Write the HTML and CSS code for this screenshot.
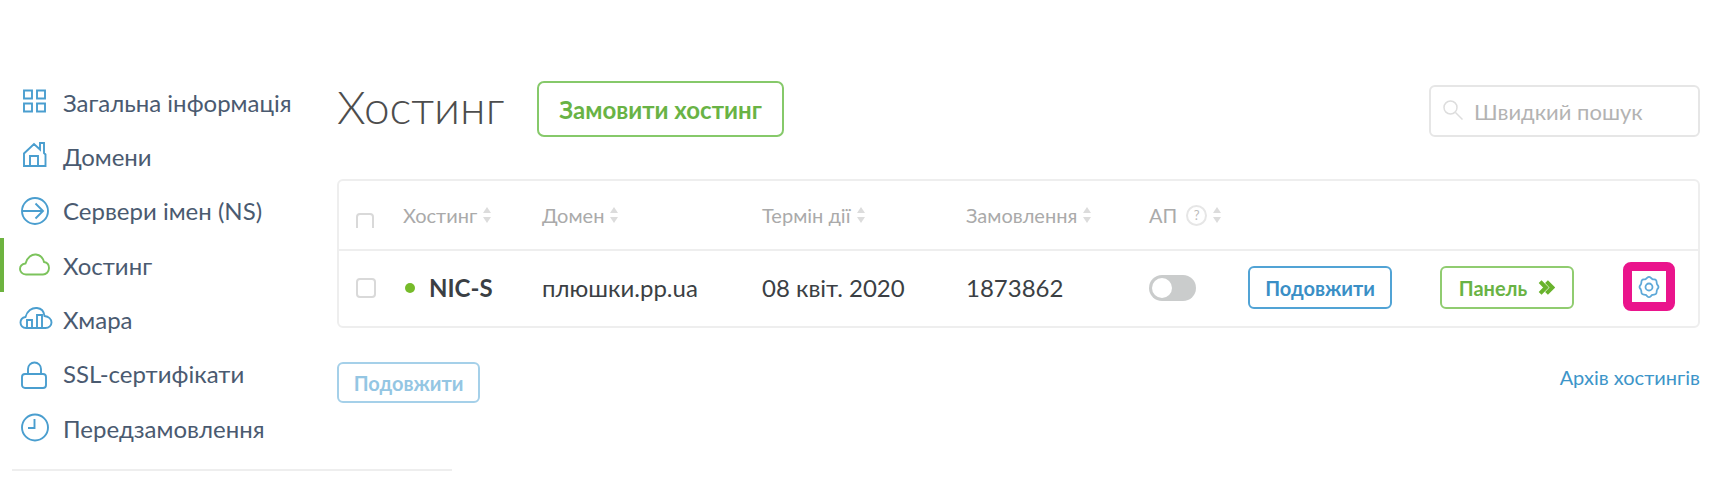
FILE: index.html
```html
<!DOCTYPE html>
<html lang="uk">
<head>
<meta charset="utf-8">
<title>Хостинг</title>
<link rel="stylesheet" href="styles.css">
</head>
<body>
<div class="layout">
  <nav class="side">
    <a class="item"><svg class="ico" viewBox="0 0 34 34"><path d="M5 5.5h8v8H5zM18 5.500h8v8h-8zM5 18.500h8v8H5zM18 18.500h8v8h-8z"/></svg>Загальна інформація</a>
    <a class="item"><svg class="ico" viewBox="0 0 34 34"><path d="M5 27V14.500L15 5l6 5.500V4h4v10l1.500 1.500V27zM11 27V17h8v10"/></svg>Домени</a>
    <a class="item"><svg class="ico" viewBox="0 0 34 34"><circle cx="16" cy="17" r="13"/><path d="M3 17h21M16.500 9.500l7.500 7.500-7.500 7.500"/></svg>Сервери імен (NS)</a>
    <a class="item active"><svg class="ico" viewBox="0 0 34 34"><path d="M7 26.500C3 26.500 1 23.500 1 21c0-3 2.500-5 5.500-5.500C8 9.500 13 6 17 6.500c4.500.5 7 3.500 8 7.500 3 .5 5 3 5 6 0 4-3 6.500-6 6.500z"/></svg>Хостинг</a>
    <a class="item"><svg class="ico" viewBox="0 0 34 34"><path d="M7 26C3.500 26 1.500 23.500 1.500 20.500c0-3 2.500-5 5-5.500C8 9 13 5.500 18 6c4.500.5 7 3.500 7.500 8 4 .5 7 3 7 6.500 0 3-2.500 5.500-6 5.500z"/><path d="M8 26v-8h5v8M18 26V13h5v13"/></svg>Хмара</a>
    <a class="item"><svg class="ico" viewBox="0 0 34 34"><rect x="3" y="17" width="24" height="14" rx="3"/><path d="M9 17v-5a6.500 6.500 0 0 1 13 0v5"/></svg>SSL-сертифікати</a>
    <a class="item"><svg class="ico" viewBox="0 0 34 34"><circle cx="16" cy="16.500" r="13"/><path d="M15.500 8v9H9"/></svg>Передзамовлення</a>
  </nav>
  <main class="main">
    <header class="head">
      <h1 class="title">Хостинг</h1>
      <a class="btn-order">Замовити хостинг</a>
      <label class="search"><svg class="search-ico" viewBox="0 0 20 20"><circle cx="7.500" cy="7.500" r="6.500"/><path d="M12.500 12.500l7 7"/></svg><span>Швидкий пошук</span></label>
    </header>
    <section class="card">
      <div class="row row-head">
        <span class="clip"><i class="check"></i></span>
        <span class="th">Хостинг<i class="sort"></i></span>
        <span class="th">Домен<i class="sort"></i></span>
        <span class="th">Термін дії<i class="sort"></i></span>
        <span class="th">Замовлення<i class="sort"></i></span>
        <span class="th">АП<b class="help">?</b><i class="sort"></i></span>
      </div>
      <div class="row row-body">
        <i class="check"></i>
        <span class="plan"><i class="dot"></i>NIC-S</span>
        <span>плюшки.pp.ua</span>
        <span>08 квіт. 2020</span>
        <span>1873862</span>
        <span><i class="toggle"></i></span>
        <span><a class="btn btn-blue">Подовжити</a></span>
        <span><a class="btn btn-green">Панель<svg class="chev" viewBox="0 0 16 16"><path d="M2 2.500L7.500 8 2 13.500M8 2.500L13.500 8 8 13.500"/></svg></a></span>
        <span class="gear-box"><svg class="gear" viewBox="0 0 24 24"><path d="M12 1.800c1.400 0 2 1.700 3.300 2.300 1.300.6 3 .1 3.800 1.100.8 1 .3 2.800 .9 4 .4 .9 1.500 1.500 1.500 2.800s-1.100 1.900-1.500 2.800c-.6 1.200-.1 3-.9 4-.8 1-2.500 .5-3.800 1.100-1.300 .6-1.900 2.300-3.300 2.300s-2-1.700-3.300-2.300c-1.300-.6-3-.1-3.800-1.100-.8-1-.3-2.800-.9-4-.4-.9-1.500-1.500-1.500-2.800s1.100-1.900 1.500-2.800c.6-1.200 .1-3 .9-4 .8-1 2.500-.5 3.800-1.100C10 3.500 10.600 1.800 12 1.800z"/><circle cx="12" cy="12" r="3.500"/></svg></span>
      </div>
    </section>
    <footer class="foot">
      <a class="btn btn-faded">Подовжити</a>
      <a class="archive">Архів хостингів</a>
    </footer>
  </main>
</div>
<div class="rule"></div>
</body>
</html>
```
FILE: styles.css
```css
* { box-sizing: border-box; }
html, body { margin: 0; padding: 0; background: #fff; }
body { font-family: Lato, "Open Sans", "Liberation Sans", sans-serif; color: #3b3f44; height: 488px; overflow: hidden; }
i { font-style: normal; }
.layout { display: flex; height: 466px; }
.side { width: 337px; flex: none; padding-top: 75px; }
.item { display: flex; align-items: center; height: 54.33px; padding-left: 19px; gap: 10px; font-size: 24px; color: #4a5a70; position: relative; }
.active::before { content: ""; position: absolute; left: 0; top: 0; bottom: 0; width: 4px; background: #6db33f; }
.ico { width: 34px; height: 34px; flex: none; fill: none; stroke: #4a9ecf; stroke-width: 1.900; }
.active .ico { stroke: #7cc35c; }
.main { width: 1363px; flex: none; padding-top: 81px; }
.head { display: flex; align-items: flex-start; height: 98px; }
.title { margin: 1px 34px 0 0; width: 166px; font-size: 46px; line-height: 50px; font-weight: 300; color: #4d4d4d; white-space: nowrap; }
.btn-order { width: 247px; height: 56px; border: 2px solid #86c96a; border-radius: 7px; display: flex; align-items: center; justify-content: center; font-size: 24px; font-weight: 700; color: #69b345; }
.search { margin-left: auto; margin-top: 4px; width: 271px; height: 52px; border: 2px solid #e6e6e6; border-radius: 6px; display: flex; align-items: center; padding-left: 12px; gap: 11px; font-size: 22px; color: #b3b3b3; }
.search-ico { width: 20px; height: 20px; fill: none; stroke: #ddd; stroke-width: 1.500; margin-top: -3px; }
.card { border: 2px solid #eee; border-radius: 6px; height: 149px; }
.row { display: grid; grid-template-columns: 47px 139px 220px 204px 183px 99px 192px 183px 53px; align-items: center; padding-left: 17px; }
.row-head { height: 70px; border-bottom: 2px solid #eee; font-size: 20px; color: #aaa; }
.row-body { height: 73px; font-size: 24px; color: #3b3f44; }
.th { display: flex; align-items: center; gap: 6px; }
.clip { display: block; height: 15px; overflow: hidden; margin-top: 11px; }
.check { display: block; width: 20px; height: 20px; border: 2px solid #d9d9d9; border-radius: 4px; background: #fff; }
.clip .check { width: 18px; }
.sort { display: inline-block; width: 8px; height: 16px; position: relative; }
.sort::before, .sort::after { content: ""; position: absolute; left: 0; border-left: 4px solid transparent; border-right: 4px solid transparent; }
.sort::before { top: 0; border-bottom: 6px solid #dcdcdc; }
.sort::after { bottom: 0; border-top: 6px solid #dcdcdc; }
.help { width: 21px; height: 21px; border: 2px solid #e6e6e6; border-radius: 50%; display: flex; align-items: center; justify-content: center; font-size: 13px; font-weight: 400; color: #bbb; margin-left: 3px; }
.plan { display: flex; align-items: center; font-weight: 700; }
.dot { width: 10px; height: 10px; border-radius: 50%; background: #76bb2a; margin: 0 14px 0 2px; }
.toggle { display: block; width: 47px; height: 26px; border-radius: 13px; background: #cacccc; position: relative; }
.toggle::before { content: ""; position: absolute; left: 3px; top: 3px; width: 20px; height: 20px; border-radius: 50%; background: #fff; }
.btn { display: flex; align-items: center; justify-content: center; border-radius: 6px; border: 2px solid; font-weight: 700; font-size: 20px; height: 43px; }
.btn-blue { width: 144px; border-color: #51a3d5; color: #3a8fc6; }
.btn-green { width: 134px; border-color: #90cc70; color: #69b345; gap: 11px; }
.chev { width: 17px; height: 17px; fill: none; stroke: #69b32d; stroke-width: 3.800; }
.gear-box { display: flex; align-items: center; justify-content: center; width: 52px; height: 49px; margin-top: -2px; border: 9px solid #ea148c; border-radius: 8px; background: #fff; }
.gear { width: 24px; height: 24px; fill: none; stroke: #5da8d8; stroke-width: 1.800; stroke-linejoin: round; }
.foot { display: flex; justify-content: space-between; align-items: center; margin-top: 34px; }
.btn-faded { width: 143px; height: 41px; border-color: #a5d0e9; color: #94c6e3; }
.archive { font-size: 20px; color: #3d95c9; margin-bottom: 12px; }
.rule { margin-left: 12px; width: 440px; height: 2px; background: #eee; margin-top: 3px; }
```
